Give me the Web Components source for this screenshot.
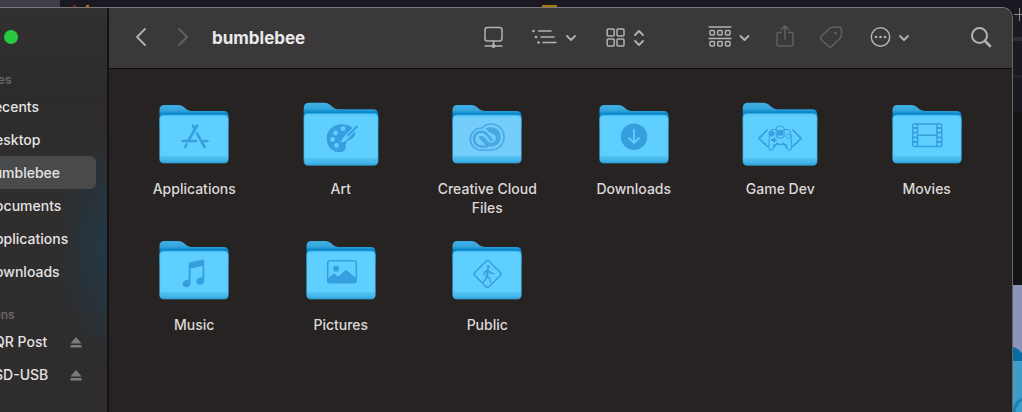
<!DOCTYPE html>
<html lang="en">
<head>
<meta charset="utf-8">
<title>bumblebee</title>
<style>
html,body{margin:0;height:100%;background:#1b1922}
body{font-family:Inter,"Liberation Sans",sans-serif;color:#e6e4e4;overflow:hidden}
</style>
</head>
<body>
<desktop-view>
  <finder-window>
    <finder-sidebar slot="sidebar">
      <sidebar-section heading="Favorites">
        <sidebar-item>Recents</sidebar-item>
        <sidebar-item>Desktop</sidebar-item>
        <sidebar-item selected>bumblebee</sidebar-item>
        <sidebar-item>Documents</sidebar-item>
        <sidebar-item>Applications</sidebar-item>
        <sidebar-item>Downloads</sidebar-item>
      </sidebar-section>
      <sidebar-section heading="Locations">
        <sidebar-item ejectable>SQR Post</sidebar-item>
        <sidebar-item ejectable>SSD-USB</sidebar-item>
      </sidebar-section>
    </finder-sidebar>
    <finder-toolbar slot="toolbar">bumblebee</finder-toolbar>
    <folder-grid>
      <folder-item glyph="apps">Applications</folder-item>
      <folder-item glyph="art" large>Art</folder-item>
      <folder-item glyph="cloud" pale>Creative Cloud Files</folder-item>
      <folder-item glyph="download">Downloads</folder-item>
      <folder-item glyph="game" large>Game Dev</folder-item>
      <folder-item glyph="movie">Movies</folder-item>
      <folder-item glyph="music">Music</folder-item>
      <folder-item glyph="picture">Pictures</folder-item>
      <folder-item glyph="public">Public</folder-item>
    </folder-grid>
  </finder-window>
</desktop-view>
<script>
const define = (name, html) => customElements.define(name, class extends HTMLElement {
  connectedCallback() {
    if (this.shadowRoot) return;
    this.attachShadow({ mode: 'open' }).innerHTML = typeof html === 'function' ? html(this) : html;
  }
});

/* Backdrop: other windows peeking out above and to the right */
define('desktop-view', `
<style>
:host{display:grid;grid-template:7px 1fr / 1fr 9px;height:100vh;
 background:linear-gradient(90deg,#3d3e4a 60px,#1b1822 60px) 0 0/100% 20px no-repeat,#1b1922}
.top{grid-column:1/3}
.top svg{display:block;width:100%;height:7px}
.edge{overflow:hidden;background:linear-gradient(#1b1922 30px,#2a2d34 30px 34px,#1b1922 34px 68px,#25252b 68px 71px,#1a1a20 71px 105px,#131313 105px 278px,#8c94b8 278px 340px,#0b6ca3 340px 354px,#3e9dc8 354px)}
.edge svg{display:block;width:9px;height:405px}
</style>
<div class="top"><svg aria-hidden="true"><path fill="#7a2029" d="M73 5h3v2h-3z"/><path fill="#a67808" d="M86 5h3v2h-3zM542 5h15v2h-15z"/></svg></div>
<slot></slot>
<div class="edge"><svg aria-hidden="true"><path d="M1 7.500h8M6.500 1v13" stroke="#8a8a8c"/><path d="M0 340q5 1 9 6v-6z" fill="#8c94b8"/><path d="M1 405q2-10 8-13" fill="none" stroke="#1c7fb2" stroke-width="3"/></svg></div>`);

define('finder-window', `
<style>
:host{display:grid;grid-template-columns:109px 1fr;min-width:0;box-sizing:border-box;border-top:1px solid #7b797b;border-right:1px solid #6a6666;border-top-right-radius:11px;overflow:hidden;background:#272322}
main{min-width:0;display:flex;flex-direction:column}
</style>
<slot name="sidebar"></slot>
<main><slot name="toolbar"></slot><slot></slot></main>`);

define('finder-sidebar', `
<style>
:host{display:block;overflow:hidden;box-sizing:border-box;border-right:2px solid #131212;
 background:radial-gradient(ellipse 60px 120px at 115px 240px,#25394a 0,#26343d 45%,transparent),linear-gradient(#323032,#2d2c2b 90px,#302d2d 200px,#2e2c2c)}
.lights{height:62px;display:flex;align-items:center;box-sizing:border-box;padding:0 0 4px 4px}
.lights button{width:14px;height:14px;border:0;padding:0;border-radius:50%;background:#28c940}
nav{margin-left:-42px}
</style>
<div class="lights"><button aria-label="Zoom window"></button></div>
<nav><slot></slot></nav>`);

define('sidebar-section', el => `
<style>
:host{display:block;margin-bottom:17px}
h2{margin:0;font-size:12px;line-height:20px;font-weight:600;color:#686666}
</style>
<h2>${el.getAttribute('heading')}</h2><slot></slot>`);

define('sidebar-item', el => `
<style>
:host{display:block;margin-right:11px}
a{display:flex;align-items:center;justify-content:space-between;height:33px;padding:0 14px 0 27px;font-size:14px;font-weight:500;color:#e4e3e3;text-decoration:none;white-space:nowrap;border-radius:6px}
:host([selected]) a{background:#494a4b}
</style>
<a href="#"><slot></slot>${el.hasAttribute('ejectable') ? '<svg width="12" height="12" aria-hidden="true" fill="#7c7b7b"><path d="M6 1 11.500 7.500H.5zM.5 9h11v2.500H.5z"/></svg>' : ''}</a>`);

const chevron = (x) => `<path class="b" d="m${x - 4} 14 4 4 4-4"/>`;
const toolIcons = {
  back: ['Back', 42, '<path class="b" d="m25 7-8 8 8 8"/>'],
  forward: ['Forward', 42, '<path class="b" d="m17 7 8 8-8 8"/>'],
  display: ['Display', 32, '<rect x="8" y="5.500" width="17" height="13.500" rx="2.500"/><path d="M16.500 19v4M8 24h17"/><circle class="f" cx="16.500" cy="24" r="2"/>'],
  list: ['View as list', 50, '<path d="M9.500 9H22M12 15h13M14 20.500h13"/><g class="f"><circle cx="4.500" cy="9" r="1.300"/><circle cx="7" cy="15" r="1.300"/><circle cx="9.500" cy="20.500" r="1.300"/></g>' + chevron(42)],
  grid: ['View as icons', 54, '<g><rect x="8.200" y="7" width="7" height="7" rx="1"/><rect x="18" y="7" width="7" height="7" rx="1"/><rect x="8.200" y="17" width="7" height="7" rx="1"/><rect x="18" y="17" width="7" height="7" rx="1"/></g><path class="b" d="m36 13 4-4 4 4m-8 6 4 4 4-4"/>'],
  group: ['Group', 50, '<path d="M6 5h22M6 16.500h22"/><g><rect x="7" y="8.500" width="4.500" height="4.500" rx="1"/><rect x="14.700" y="8.500" width="4.500" height="4.500" rx="1"/><rect x="22.500" y="8.500" width="4.500" height="4.500" rx="1"/><rect x="7" y="19.500" width="4.500" height="4.500" rx="1"/><rect x="14.700" y="19.500" width="4.500" height="4.500" rx="1"/><rect x="22.500" y="19.500" width="4.500" height="4.500" rx="1"/></g>' + chevron(41.5)],
  share: ['Share', 24, '<path d="M8.500 10.500H6Q4 10.500 4 12.500v9.500q0 2 2 2h12q2 0 2-2v-9.500q0-2-2-2h-2.500M12 17V4M8.500 7.500 12 4l3.500 3.500"/>'],
  tag: ['Tags', 28, '<path d="M4.200 14.500 12 7q1.700-1.700 4-1.700h5q3.500 0 3.500 3.500v3.700q0 2.300-1.700 4L15 24.300q-1.700 1.700-3.400 0l-7.400-6.800q-1.500-1.500 0-3z"/><circle class="f" cx="18.500" cy="11" r="1.500"/>'],
  more: ['More', 52, '<circle cx="15.500" cy="15" r="9.200"/><g class="f"><circle cx="11" cy="15" r="1.300"/><circle cx="15.500" cy="15" r="1.300"/><circle cx="20" cy="15" r="1.300"/></g>' + chevron(39)],
  search: ['Search', 28, '<circle cx="12.500" cy="13.500" r="7.500" stroke-width="2"/><path d="m18 19 5 5" stroke-width="2.600"/>']
};

define('tool-button', el => {
  const [label, width, art] = toolIcons[el.getAttribute('icon')];
  return `
<style>
:host{display:block;flex:none;color:#b3b1b1}
:host([dim]){color:#626061}
button{display:block;padding:0;border:0;background:none;color:inherit}
svg{display:block;fill:none;stroke:currentColor;stroke-width:1.5;stroke-linecap:round;stroke-linejoin:round}
.b{stroke-width:1.8}.f{fill:currentColor;stroke:none}
</style>
<button aria-label="${label}"${el.hasAttribute('dim') ? ' disabled' : ''}><svg width="${width}" height="32">${art}</svg></button>`;
});

define('finder-toolbar', `
<style>
:host{display:flex;align-items:center;height:60px;flex:none;box-sizing:content-box;padding:0 17px 0 11px;background:#3b3839;border-bottom:1px solid #111010}
h1{margin:0 auto 0 8px;font-size:17px;line-height:24px;font-weight:700;color:#ebeaea}
.tools{display:flex;gap:20px}
.apart{margin-left:30px}
</style>
<tool-button icon="back"></tool-button><tool-button icon="forward" dim></tool-button>
<h1><slot></slot></h1>
<div class="tools">
<tool-button icon="display"></tool-button><tool-button icon="list"></tool-button><tool-button icon="grid"></tool-button>
<tool-button icon="group" class="apart"></tool-button><tool-button icon="share" dim></tool-button><tool-button icon="tag" dim></tool-button><tool-button icon="more"></tool-button>
<tool-button icon="search" class="apart"></tool-button>
</div>`);

define('folder-grid', `
<style>
:host{display:grid;grid-template-columns:repeat(6,1fr);grid-auto-rows:136px;padding:33px 12px 0}
</style><slot></slot>`);

const glyphs = {
  apps: '<g class="s" stroke-width="2.600"><path d="m41.300 23.500-8.600 14.500M30.500 42.500l-1.300 2.500M36.800 23.500l1.800 3M41 31.500l7.600 13.500"/><path d="M26.500 39H40M47.500 39h4"/></g>',
  art: '<path class="g" d="M39 22.300c-9 0-15.300 6-15.300 14 0 8.500 6 14 12.500 14 5.500 0 6.500-2.800 6.500-6 0-4 1.500-5.500 5-7 4-2 5.500-5 4-8.500-2-4-7-6.500-12.700-6.500z"/><g class="h"><circle cx="40" cy="26.700" r="2.400"/><circle cx="32.600" cy="31" r="2.400"/><circle cx="29.500" cy="37.500" r="2.400"/><circle cx="33.500" cy="43.500" r="2.400"/></g><path d="M54 24.500 44.500 34" class="l" stroke-width="4.500"/><path d="M54 24.500 44.500 34" class="s" stroke-width="2"/><path class="h" d="m43.500 33 2 2c-2 4.500-4 5.200-8 5.200 1.500-1.200 1.700-5 6-7.200z"/>',
  cloud: '<path class="s" stroke-width="1.600" d="M33 26C35.500 23.200 38.500 22 42 22c7.300 0 13 5.700 13 13s-5.700 13-13 13H32c-6 0-10.700-5-10.700-11s5-11 11.700-11z"/><path class="g" d="M36.500 26.500c1.700-.9 3.500-1.300 5.500-1.300 5.500 0 9.800 4.400 9.800 9.800s-4.300 9.800-9.800 9.800c-3 0-5.500-1.300-7.500-3.800l-5-6c2-1.700 4.500-1.300 6 .5l3 3.500c2 2.200 5 2.500 7 .5 2-2 2-5-.5-7-2.500-2-5-1-8.500-6z"/><path class="s" stroke-width="2.600" d="M38 44.500h-5.500c-4.200 0-7.500-3.300-7.500-7.500s3.300-7.300 7.300-7.300c2.200 0 4.200 1 5.700 2.800l4.500 5.500"/>',
  download: '<circle class="g" cx="38" cy="34.700" r="13.200"/><path class="l" stroke-width="1.900" d="M38 28v12.500m-5-4.500 5 5 5-5"/>',
  game: '<g class="s" stroke-width="1.700"><path d="m25.200 28-8.200 8.300 8.200 8M50.800 28l8.200 8.300-8.200 8"/></g><path class="s" stroke-width="1.100" d="M34.200 27.500H31q-3 .5-3.700 7.500l-.5 9q0 4 2.200 4.500 2 0 3-6h12.500q1 6 3 6 2.200-.5 2.200-4.500l-.5-9q-.5-7-3.500-7.500h-3.500M34.200 27q0-3 4-3t4 3v6q0 3-4 3t-4-3zM32 46l3-5 3.300 2 3.200-2 3 5"/><g class="g"><rect x="35.200" y="28" width="6.200" height="5.500"/><circle cx="29.500" cy="31.500" r="3"/><path d="M29 37h2v-1.500h2V37h1.500v2H33v1.500h-2V39h-2z"/></g><path class="s" d="m46.500 32 2.500 2.500-2.500 2.500-2.500-2.500z"/>',
  movie: '<g class="s" stroke-width="1.500"><rect x="23.700" y="22" width="29" height="22.600" rx="1.500"/><path d="M28.500 22v22.600M48 22v22.600M28.500 33.300H48"/><path stroke-width="1.800" d="M24 26h4m-4 4.700h4m-4 4.600h4M24 40h4m20-14h4m-4 4.700h4m-4 4.600h4M48 40h4"/></g>',
  music: '<path class="g" d="M32.700 25.800q0-1.300 1.300-1.600l13-2.700q1.300-.2 1.300 1.200v20c0 2.500-2 4-4.300 4-2.200 0-3.700-1.300-3.700-3.200 0-2.200 1.700-3.500 4-3.900 1.700-.3 2.300-.6 2.300-2V28l-12 2.500v14.700c0 2.500-2 4-4.300 4-2.200 0-3.700-1.300-3.700-3.200 0-2.200 1.700-3.500 4-3.900 1.600-.3 2.100-.6 2.100-2z"/>',
  picture: '<rect class="s" x="24.700" y="22.700" width="28.600" height="22" rx="2.500" stroke-width="1.600"/><circle class="g" cx="33" cy="30.700" r="3"/><path class="g" d="m25 40.500 5.300-4.500q1-.8 2 0l2.700 2.700 7.200-6.200q1-.8 2 0l9 8v4.500H25z"/>',
  public: '<path class="s" stroke-width="1.600" d="M37 23.300q1.500-1.500 3 0L51.200 34.500q1.500 1.500 0 3L40 48.700q-1.500 1.500-3 0L25.800 37.500q-1.500-1.500 0-3z"/><circle class="g" cx="39.300" cy="29" r="1.700"/><path class="s" stroke-width="1.500" d="m38.800 32-1 6 3 2.700.8 3.300M37.600 38.500l-1 3-2.500 2.700M38.500 32.500l-3 1.700-.5 2.800M39.500 32.500l2 2.500 3 .5"/><path class="s" stroke-width="2.500" d="m38.700 32.500-.5 5"/>'
};

define('folder-item', el => `
<style>
:host{display:flex;flex-direction:column;align-items:center;min-width:0;--front:#5fcfff;--ink:#369fe0}
:host([pale]){--front:#74cdfb;--ink:#48a8e2}
svg{display:block;flex:none;overflow:visible}
span{display:block;width:112px;margin-top:13px;font-size:14px;line-height:19px;font-weight:500;text-align:center;color:#dbd9d9}
.g{fill:var(--ink)}.h{fill:var(--front)}
.s{fill:none;stroke:var(--ink);stroke-linecap:round;stroke-linejoin:round}
.l{fill:none;stroke:var(--front);stroke-linecap:round;stroke-linejoin:round}
</style>
<svg width="76" height="64" viewBox="0 0 76 64" aria-hidden="true">
<defs>
<linearGradient id="back" gradientUnits="userSpaceOnUse" x1="0" y1="3" x2="0" y2="13"><stop stop-color="#40afe5"/><stop offset=".55" stop-color="#35a5dd"/><stop offset=".9" stop-color="#0487cb"/></linearGradient>
<linearGradient id="front" x2="0" y2="1"><stop stop-color="#57c4f5"/><stop offset=".06" style="stop-color:var(--front)"/><stop offset=".84" style="stop-color:var(--front)"/><stop offset=".88" stop-color="#4dbcef"/><stop offset=".94" stop-color="#48b8ec"/><stop offset="1" stop-color="#27a0dc"/></linearGradient>
</defs>
<g ${el.hasAttribute('large') ? 'transform="translate(-3.040 -2.560) scale(1.080)"' : ''}>
<path fill="url(#back)" d="M3.500 8q0-5 5-5h14q3 0 5 1.700l3 2.500q2 1.800 5 1.800h32q5 0 5 5v10h-69z"/>
<path fill="url(#front)" stroke="#36a9df" stroke-width=".6" d="M3.700 17q0-4 4-4h60.600q4 0 4 4v39.500q0 4.500-4 4.500H7.700q-4 0-4-4.500z"/>
</g>
${glyphs[el.getAttribute('glyph')]}
</svg>
<span><slot></slot></span>`);
</script>
</body>
</html>
